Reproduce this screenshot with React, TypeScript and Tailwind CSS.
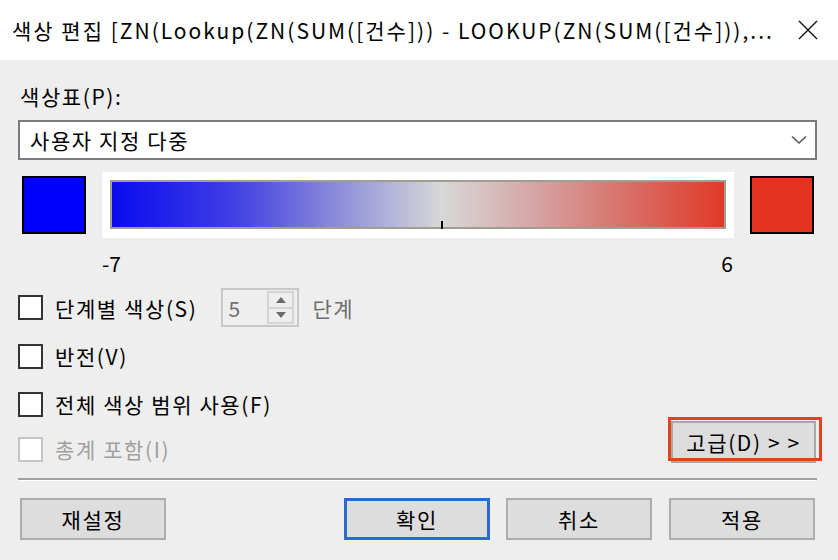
import React from "react";

const font = { fontFamily: '"Noto Sans CJK KR", "Noto Sans", sans-serif' };

function CheckRow({ label, disabled }: { label: string; disabled?: boolean }) {
  return (
    <div className="flex items-center">
      <div
        className={
          "w-[25px] h-[25px] border-2 bg-white " +
          (disabled ? "border-[#c4c4c4]" : "border-[#333333]")
        }
      />
      <span
        className={
          "ml-[12px] text-[21px] leading-[24px] tracking-[1.6px] " +
          (disabled ? "text-[#a0a0a0]" : "text-black")
        }
      >
        {label}
      </span>
    </div>
  );
}

function Btn({ label, primary, className }: { label: string; primary?: boolean; className?: string }) {
  return (
    <div
      className={
        "h-[42px] w-[146px] bg-[#dddddd] flex items-center justify-center text-[21px] leading-[24px] tracking-[1.6px] text-black " +
        (primary ? "border-[3px] border-[#2b6bd0] " : "border-2 border-[#adadad] ") +
        (className || "")
      }
    >
      {label}
    </div>
  );
}

export default function App() {
  return (
    <div className="w-[838px] h-[560px] bg-[#eeeeee] flex flex-col overflow-hidden" style={font}>
      {/* Title bar */}
      <div className="h-[60px] bg-white flex items-center pl-[12px] pr-[18px] shrink-0">
        <span className="text-[21px] leading-[24px] text-black tracking-[2px] whitespace-nowrap">
          색상 편집 [ZN(Lookup(ZN(SUM([건수])) - LOOKUP(ZN(SUM([건수])),...
        </span>
        <div className="ml-auto w-[24px] h-[24px] flex items-center justify-center">
          <svg width="20" height="20" viewBox="0 0 20 20">
            <path d="M1 1 L19 19 M19 1 L1 19" stroke="#111" strokeWidth="1.4" fill="none" />
          </svg>
        </div>
      </div>

      {/* Body */}
      <div className="flex flex-col pl-[18px] pr-[21px] pt-[24px]">
        <div className="text-[21px] leading-[24px] tracking-[1.6px] text-black pl-[2px]">색상표(P):</div>

        {/* Dropdown */}
        <div className="mt-[12px] h-[40px] bg-white border-2 border-[#7a7a7a] flex items-center pl-[10px] pr-[8px]">
          <span className="text-[21px] leading-[24px] tracking-[1.6px] text-black">사용자 지정 다중</span>
          <svg className="ml-auto" width="16" height="10" viewBox="0 0 16 10">
            <path d="M1 1.5 L8 8 L15 1.5" stroke="#555" strokeWidth="1.6" fill="none" />
          </svg>
        </div>

        {/* Gradient row */}
        <div className="mt-[12px] h-[66px] flex items-center">
          <div className="ml-[4px] w-[64px] h-[58px] bg-[#0000ff] border-2 border-black" />
          <div className="ml-[16px] w-[632px] h-[66px] bg-white p-[8px] pb-[9px]">
            <div className="relative h-full border-2 border-[#a09d91]">
              <div
                className="w-full h-full"
                style={{
                  background:
                    "linear-gradient(to right, #0a0aef 0%, #4040e4 20%, #8888da 36%, #d8d8d8 53.8%, #d6a8a8 68%, #d87068 84%, #e03a28 100%)",
                }}
              />
              <div className="absolute left-[329px] bottom-[-2px] w-[2px] h-[8px] bg-black" />
            </div>
          </div>
          <div className="ml-[16px] w-[64px] h-[58px] bg-[#e3321e] border-2 border-black" />
        </div>

        {/* Labels */}
        <div className="mt-[13px] ml-[84px] w-[632px] flex justify-between text-[21px] leading-[24px] text-black">
          <span>-7</span>
          <span className="pr-[1px]">6</span>
        </div>

        {/* Row 1 */}
        <div className="mt-[13px] h-[39px] flex items-center">
          <CheckRow label="단계별 색상(S)" />
          <div className="ml-[24px] w-[78px] h-[39px] border-2 border-[#c8c8c8] flex items-center pl-[5px] pr-[3px]">
            <span className="text-[21px] leading-[24px] text-[#707070]">5</span>
            <div className="ml-auto w-[27px] h-[33px] border-2 border-[#d4d4d4] flex flex-col">
              <div className="flex-1 flex items-center justify-center border-b-2 border-[#d4d4d4]">
                <svg width="10" height="6" viewBox="0 0 10 6">
                  <path d="M5 0 L10 6 L0 6 Z" fill="#6a6a6a" />
                </svg>
              </div>
              <div className="flex-1 flex items-center justify-center">
                <svg width="10" height="6" viewBox="0 0 10 6">
                  <path d="M0 0 L10 0 L5 6 Z" fill="#6a6a6a" />
                </svg>
              </div>
            </div>
          </div>
          <span className="ml-[13px] text-[21px] leading-[24px] tracking-[1.6px] text-[#6d6d6d]">단계</span>
        </div>

        {/* Row 2 */}
        <div className="mt-[9px] h-[40px] flex items-center">
          <CheckRow label="반전(V)" />
        </div>

        {/* Row 3 */}
        <div className="mt-[8px] h-[37px] flex items-center pt-[3px]">
          <CheckRow label="전체 색상 범위 사용(F)" />
        </div>

        {/* Row 4 */}
        <div className="h-[48px] flex items-start justify-between">
          <div className="mt-[8px] h-[40px] flex items-center">
            <CheckRow label="총계 포함(I)" disabled />
          </div>
          <div className="relative mr-[1px]">
            <div className="w-[145px] h-[42px] bg-[#dddddd] border-2 border-[#a8a8a8] flex items-center justify-center text-[21px] leading-[24px] tracking-[1.6px] text-black">
              고급(D) &gt; &gt;
            </div>
            <div className="absolute left-[-3px] top-[-4px] w-[154px] h-[44px] border-[3px] border-[#e5401f]" />
          </div>
        </div>

        {/* Separator */}
        <div className="mt-[9px] h-[2px] bg-[#a0a0a0]" />
        <div className="h-[1px] bg-white" />

        {/* Bottom buttons */}
        <div className="mt-[17px] flex items-center px-[2px]">
          <Btn label="재설정" />
          <Btn label="확인" primary className="ml-auto" />
          <Btn label="취소" className="ml-[16px] w-[145px]" />
          <Btn label="적용" className="ml-[17px] w-[145px]" />
        </div>
      </div>
    </div>
  );
}
